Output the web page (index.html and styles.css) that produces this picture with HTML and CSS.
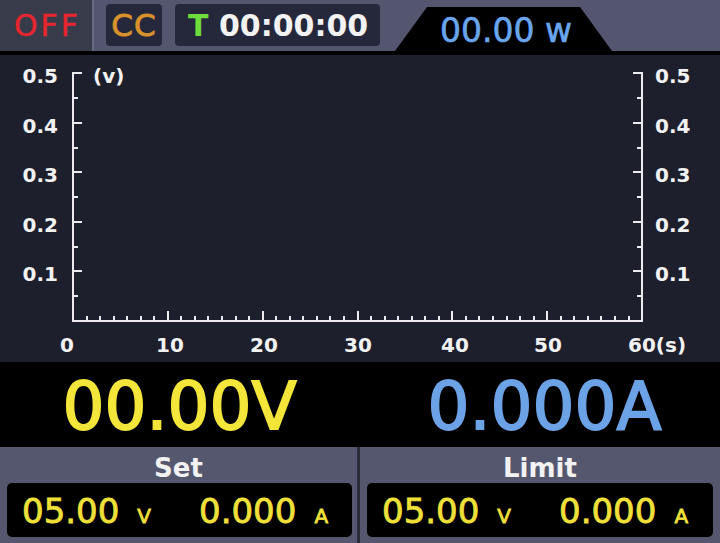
FILE: index.html
```html
<!DOCTYPE html>
<html>
<head>
<meta charset="utf-8">
<link rel="stylesheet" href="styles.css">
</head>
<body>
<div class="screen">
  <div class="topbar">
    <div class="off">OFF</div>
    <div class="chip cc">CC</div>
    <div class="chip timer"><span class="t">T</span>&nbsp;00:00:00</div>
    <div class="power">00.00 w</div>
  </div>
  <div class="chart">
    <svg width="720" height="307" viewBox="0 55 720 307" class="plot">
      <g class="axis" fill="none" stroke="#ececf0" stroke-width="2">
        <path d="M82 73H73V321H642V73H633"/>
        <path d="M73 123H82M73 172H82M73 222H82M73 271H82"/>
        <path d="M73 98H78M73 148H78M73 197H78M73 247H78M73 296H78"/>
        <path d="M642 123H633M642 172H633M642 222H633M642 271H633"/>
        <path d="M642 98H637M642 148H637M642 197H637M642 247H637M642 296H637"/>
        <path d="M168 321V311M263 321V311M358 321V311M452 321V311M547 321V311"/>
        <path d="M87 321V316M100 321V316M114 321V316M127 321V316M141 321V316M154 321V316M181 321V316M195 321V316M208 321V316M222 321V316M236 321V316M249 321V316M276 321V316M290 321V316M303 321V316M317 321V316M330 321V316M344 321V316M371 321V316M385 321V316M398 321V316M412 321V316M425 321V316M439 321V316M466 321V316M479 321V316M493 321V316M507 321V316M520 321V316M534 321V316M561 321V316M574 321V316M588 321V316M601 321V316M615 321V316M629 321V316"/>
      </g>
      <g class="lbl" fill="#f2f2f2">
        <text x="58" y="83" text-anchor="end">0.5</text>
        <text x="58" y="133" text-anchor="end">0.4</text>
        <text x="58" y="182" text-anchor="end">0.3</text>
        <text x="58" y="232" text-anchor="end">0.2</text>
        <text x="58" y="281" text-anchor="end">0.1</text>
        <text x="93" y="83">(v)</text>
        <text x="655" y="83">0.5</text>
        <text x="655" y="133">0.4</text>
        <text x="655" y="182">0.3</text>
        <text x="655" y="232">0.2</text>
        <text x="655" y="281">0.1</text>
        <text x="67" y="352" text-anchor="middle">0</text>
        <text x="170" y="352" text-anchor="middle">10</text>
        <text x="264" y="352" text-anchor="middle">20</text>
        <text x="358" y="352" text-anchor="middle">30</text>
        <text x="455" y="352" text-anchor="middle">40</text>
        <text x="548" y="352" text-anchor="middle">50</text>
        <text x="628" y="352">60(s)</text>
      </g>
    </svg>
  </div>
  <div class="readout">
    <div class="big volt">00.00V</div>
    <div class="big amp">0.000A</div>
  </div>
  <div class="panels">
    <div class="panel left">
      <div class="ptitle">Set</div>
      <div class="pbox"><span class="val">05.00</span><span class="unit">V</span><span class="val second">0.000</span><span class="unit">A</span></div>
    </div>
    <div class="panel right">
      <div class="ptitle">Limit</div>
      <div class="pbox"><span class="val">05.00</span><span class="unit">V</span><span class="val second">0.000</span><span class="unit">A</span></div>
    </div>
  </div>
</div>
</body>
</html>
```

FILE: styles.css
```css
* { box-sizing: border-box; }
html, body { margin: 0; padding: 0; background: #000; }
body { font-family: "DejaVu Sans", "Liberation Sans", sans-serif; }

.screen {
  width: 720px;
  height: 543px;
  overflow: hidden;
  background: #000;
}

/* ---------- top bar ---------- */
.topbar {
  display: flex;
  height: 55px;
  background: #545670;
  border-bottom: 4px solid #000;
}
.off {
  width: 94px;
  height: 51px;
  background: #383b4a;
  border-right: 2px solid #686a82;
  color: #e8262e;
  font-size: 30px;
  letter-spacing: 3px;
  padding-left: 3px;
  -webkit-text-stroke: 0.4px #e8262e;
  display: flex;
  align-items: center;
  justify-content: center;
}
.chip {
  margin-top: 4px;
  height: 42px;
  background: #25273a;
  border-radius: 4px;
  display: flex;
  align-items: center;
  font-size: 30px;
}
.cc {
  margin-left: 12px;
  width: 56px;
  justify-content: center;
  color: #d8922c;
  font-size: 31px;
  letter-spacing: 1px;
  -webkit-text-stroke: 0.9px #d8922c;
}
.timer {
  margin-left: 13px;
  width: 205px;
  padding-left: 13px;
  color: #f2f2f2;
  font-weight: bold;
}
.timer .t { color: #6ddc3c; }
.power {
  margin-left: 15px;
  margin-top: 7px;
  width: 217px;
  height: 44px;
  background: #000;
  clip-path: polygon(32px 0, 185px 0, 100% 100%, 0 100%);
  padding-left: 45px;
  padding-top: 2px;
  color: #6aa6ee;
  font-size: 33px;
  -webkit-text-stroke: 0.6px #6aa6ee;
  display: flex;
  align-items: center;
}

/* ---------- chart ---------- */
.chart {
  height: 307px;
  background: #1e1f2d;
}
.plot { display: block; }
.lbl {
  font-family: "DejaVu Sans", sans-serif;
  font-weight: bold;
  font-size: 20px;
}

/* ---------- readout ---------- */
.readout {
  display: flex;
  height: 85px;
  background: #000;
}
.big {
  flex: 1;
  text-align: center;
  font-size: 66px;
  line-height: 81px;
  padding-top: 4px;
}
.volt { color: #f3e53a; padding-left: 4px; -webkit-text-stroke: 1.8px #f3e53a; }
.amp { color: #6ca2e6; padding-left: 14px; -webkit-text-stroke: 1.8px #6ca2e6; }

/* ---------- bottom panels ---------- */
.panels {
  display: flex;
  height: 96px;
  background: #55576f;
}
.panel { display: flex; flex-direction: column; }
.panel.left {
  width: 360px;
  border-right: 3px solid #2b2c3a;
}
.panel.right { flex: 1; }
.ptitle {
  height: 36px;
  line-height: 42px;
  text-align: center;
  color: #f2f2f2;
  font-weight: bold;
  font-size: 26px;
}
.pbox {
  height: 54px;
  background: #000;
  border-radius: 5px;
  display: flex;
  align-items: baseline;
  padding-left: 15px;
  padding-top: 1px;
  line-height: 54px;
  color: #efe03a;
  -webkit-text-stroke: 0.8px #efe03a;
}
.left .pbox { margin: 0 5px 0 7px; }
.right .pbox { margin: 0 7px; }
.val { font-size: 34px; }
.unit { font-size: 20px; margin-left: 18px; }
.val.second { margin-left: 48px; }
```
